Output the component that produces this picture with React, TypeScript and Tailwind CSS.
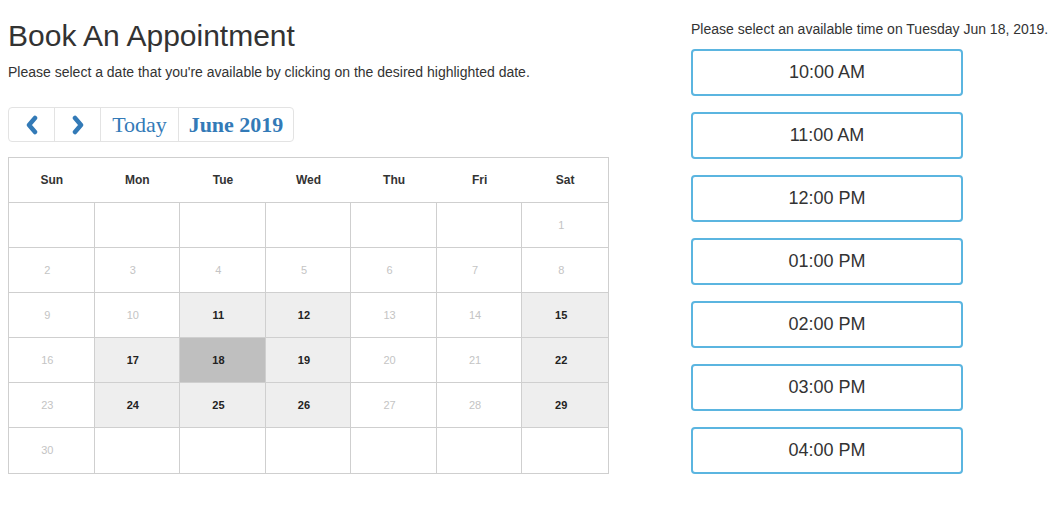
import React from "react";

const days = ["Sun", "Mon", "Tue", "Wed", "Thu", "Fri", "Sat"];
const available = new Set([11, 12, 15, 17, 19, 22, 24, 25, 26, 29]);
const selected = 18;
const cells: (number | null)[] = [
  null, null, null, null, null, null, 1,
  2, 3, 4, 5, 6, 7, 8,
  9, 10, 11, 12, 13, 14, 15,
  16, 17, 18, 19, 20, 21, 22,
  23, 24, 25, 26, 27, 28, 29,
  30, null, null, null, null, null, null,
];
const times = ["10:00 AM", "11:00 AM", "12:00 PM", "01:00 PM", "02:00 PM", "03:00 PM", "04:00 PM"];

function Chevron({ dir }: { dir: "left" | "right" }) {
  return (
    <svg width="16" height="20" viewBox="0 0 16 20">
      <path
        d={dir === "left" ? "M11 3 L5 10 L11 17" : "M5 3 L11 10 L5 17"}
        fill="none"
        stroke="#337ab7"
        strokeWidth="4.5"
        strokeLinecap="round"
        strokeLinejoin="round"
      />
    </svg>
  );
}

export default function App() {
  return (
    <div className="w-[1055px] h-[514px] bg-white font-['Liberation_Sans',Arial,sans-serif] text-[#333] flex">
      <div className="w-[683px] pl-2 pt-[18px]">
        <h1 className="text-[30px] leading-[36px] text-[#333]">Book An Appointment</h1>
        <p className="text-[14px] leading-[20px] mt-[8px] text-[#333]">
          Please select a date that you're available by clicking on the desired highlighted date.
        </p>
        <div className="mt-[25px] inline-flex h-[35px] border border-[#e3e3e3] rounded-[4px] font-['Liberation_Serif',serif] text-[#337ab7]">
          <div className="w-[46px] flex items-center justify-center border-r border-[#e3e3e3]">
            <Chevron dir="left" />
          </div>
          <div className="w-[46px] flex items-center justify-center border-r border-[#e3e3e3]">
            <Chevron dir="right" />
          </div>
          <div className="w-[78px] flex items-center justify-center border-r border-[#e3e3e3] text-[22px]">Today</div>
          <div className="w-[114px] flex items-center justify-center text-[22px] font-bold">June 2019</div>
        </div>
        <div className="mt-[15px] w-[601px] border border-[#cfcfcf]">
          <div className="grid grid-cols-7 h-[45px] border-b border-[#cfcfcf]">
            {days.map((d) => (
              <div key={d} className="flex items-center justify-center text-[12px] font-bold text-[#333]">
                {d}
              </div>
            ))}
          </div>
          <div className="grid grid-cols-7">
            {cells.map((n, i) => {
              const col = i % 7;
              const row = Math.floor(i / 7);
              const isAvail = n !== null && available.has(n);
              const isSel = n === selected;
              return (
                <div
                  key={i}
                  className={
                    "h-[45px] flex items-center justify-center pr-2 text-[11px] " +
                    (col < 6 ? "border-r border-[#cfcfcf] " : "") +
                    (row < 5 ? "border-b border-[#cfcfcf] " : "") +
                    (isSel
                      ? "bg-[#bfbfbf] font-bold text-[#222]"
                      : isAvail
                      ? "bg-[#eeeeee] font-bold text-[#222]"
                      : "text-[#c4c4c4]")
                  }
                >
                  {n ?? ""}
                </div>
              );
            })}
          </div>
        </div>
      </div>
      <div className="pl-2 pt-[19px]">
        <p className="text-[14px] leading-[20px] text-[#333] whitespace-nowrap">
          Please select an available time on Tuesday Jun 18, 2019.
        </p>
        <div className="mt-[10px] flex flex-col gap-4">
          {times.map((t) => (
            <button
              key={t}
              className="w-[272px] h-[47px] border-2 border-[#5bb5e0] rounded-[4px] bg-white text-[18px] text-[#333] flex items-center justify-center"
            >
              {t}
            </button>
          ))}
        </div>
      </div>
    </div>
  );
}
